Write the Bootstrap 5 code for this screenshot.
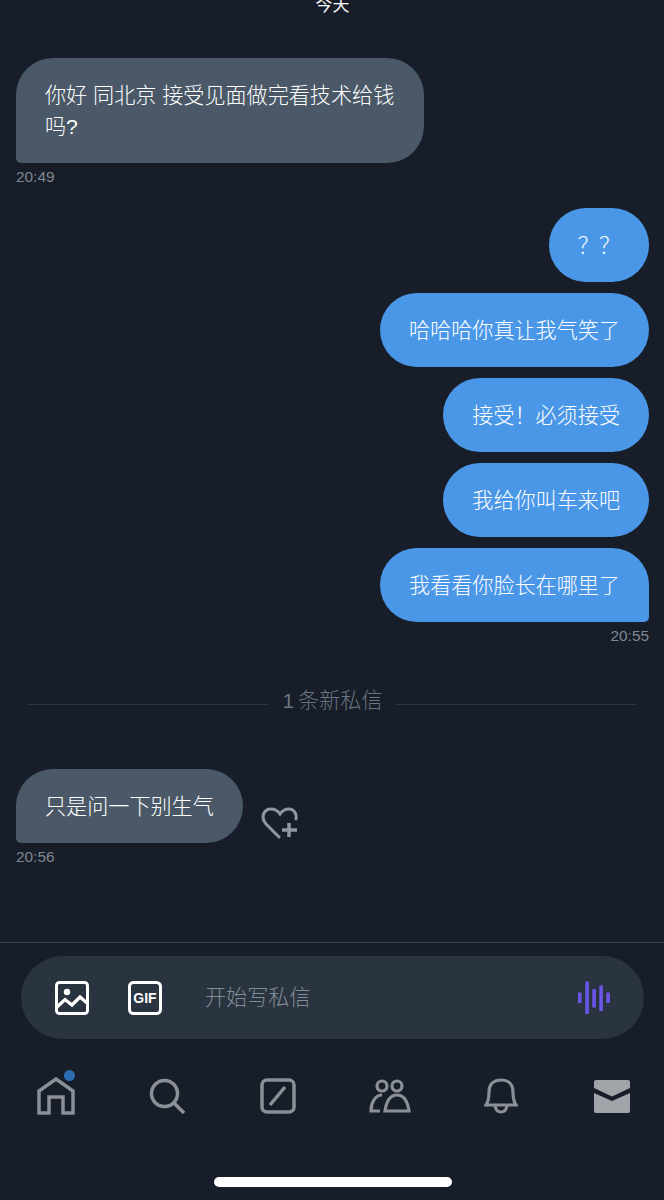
<!DOCTYPE html>
<html lang="zh-CN">
  <head>
    <meta charset="UTF-8" />
    <meta name="viewport" content="width=device-width, initial-scale=1.0" />
    <title>私信</title>
    <link
      rel="stylesheet"
      href="https://cdn.jsdelivr.net/npm/bootstrap@5.3.3/dist/css/bootstrap.min.css"
    />
    <style>
      html, body { background: #171e29; }
      body { font-family: "Liberation Sans", "Noto Sans CJK SC", sans-serif; }
      .screen { width: 664px; height: 1200px; overflow: hidden; background: #171e29; }
      .day-label { font-size: 17px; line-height: 24px; margin-top: -6px; color: #fff; }
      .thread { padding: 0 15px 0 16px; height: 942px; }
      .bubble { font-size: 21.1px; line-height: 31px; padding: 21.5px 29px; border-radius: 37px; color: #fff; max-width: 408px; font-weight: 300; }
      .bubble-in { background: #4a5867; border-bottom-left-radius: 5px; }
      .bubble-out { background: #4a97e8; }
      .bubble-tail { border-bottom-right-radius: 5px; }
      .stamp { font-size: 15.4px; line-height: 20px; color: #7f8790; margin-top: 4px; }
      .first-msg { margin-top: 40px; }
      .out-group { margin-top: 21px; gap: 11px; }
      .divider-row { margin: 33px 12px 0; gap: 14px; height: 44px; }
      .divider-line { height: 1px; background: #2b3541; margin-top: 6px; }
      .divider-text { font-size: 21.1px; color: #6a7581; font-weight: 300; word-spacing: -2px; }
      .last-msg { margin-top: 46px; }
      .react-icon { margin: 37px 0 0 18px; }
      .composer-wrap { border-top: 1px solid #3a4450; padding: 13px 20px 0 21px; }
      .composer { height: 83px; background: #2a3440; border-radius: 41.5px; padding: 0 33px 0 34px; }
      .placeholder-text { font-size: 21.1px; color: #838d97; margin-left: 43px; font-weight: 300; }
      .gif-icon { margin-left: 39px; }
      .tabbar { display: grid; grid-template-columns: repeat(6, 111.3px); justify-items: center; align-items: center; align-content: start; grid-auto-rows: 38px; padding-top: 38px; height: 138px; }
      .tab-dot { top: -7px; left: 27px; width: 11px; height: 11px; background: #2f6db3; }
      .home-pill { width: 238px; height: 10px; background: #fff; border-radius: 5px; margin-left: 214px; }
    </style>
  </head>
  <body>
    <div class="screen d-flex flex-column">
      <div class="thread">
        <div class="day-label text-center">今天</div>

        <div class="first-msg">
          <div class="bubble bubble-in">你好 同北京 接受见面做完看技术给钱吗?</div>
          <div class="stamp">20:49</div>
        </div>

        <div class="out-group d-flex flex-column align-items-end">
          <div class="bubble bubble-out">？？</div>
          <div class="bubble bubble-out">哈哈哈你真让我气笑了</div>
          <div class="bubble bubble-out">接受！必须接受</div>
          <div class="bubble bubble-out">我给你叫车来吧</div>
          <div class="bubble bubble-out bubble-tail">我看看你脸长在哪里了</div>
        </div>
        <div class="stamp text-end">20:55</div>

        <div class="divider-row d-flex align-items-center">
          <div class="divider-line flex-grow-1"></div>
          <div class="divider-text">1 条新私信</div>
          <div class="divider-line flex-grow-1"></div>
        </div>

        <div class="last-msg">
          <div class="d-flex align-items-start">
            <div class="bubble bubble-in">只是问一下别生气</div>
            <svg class="react-icon" width="38" height="34" viewBox="0 0 38 34" fill="none" stroke="#8f98a1" stroke-width="3" stroke-linecap="round">
              <path d="M18 31 L5 18 C-1 11 3 3 10 3 C14 3 17 5 19 8 C21 5 24 3 28 3 C33 3 36 8 35 13" />
              <path d="M28 17 V31 M21 24 H36" stroke-linecap="butt" stroke-width="3.5" />
            </svg>
          </div>
          <div class="stamp">20:56</div>
        </div>
      </div>

      <div class="composer-wrap">
        <div class="composer d-flex align-items-center">
          <svg width="34" height="34" viewBox="0 0 34 34" fill="none" stroke="#fff" stroke-width="3">
            <rect x="1.5" y="1.5" width="31" height="31" rx="3" />
            <circle cx="12" cy="11" r="3.2" fill="#fff" stroke="none" />
            <path d="M2 26 L10 18.5 L17 24 L25 16 L32 22" stroke-width="3.2" />
          </svg>
          <svg class="gif-icon" width="34" height="34" viewBox="0 0 34 34" fill="none" stroke="#fff" stroke-width="3">
            <rect x="1.5" y="1.5" width="31" height="31" rx="4" />
            <text x="17" y="22" text-anchor="middle" fill="#fff" stroke="none" font-family="Liberation Sans, sans-serif" font-weight="700" font-size="14">GIF</text>
          </svg>
          <div class="placeholder-text flex-grow-1">开始写私信</div>
          <svg width="33" height="34" viewBox="0 0 33 34" fill="#6a55e6">
            <rect x="0" y="11.5" width="3.6" height="10.5" />
            <rect x="7.3" y="0.5" width="3.6" height="32.5" />
            <rect x="14.3" y="8" width="3.6" height="18.5" />
            <rect x="21.3" y="4.5" width="3.6" height="25.5" />
            <rect x="28.3" y="11.5" width="3.6" height="10.5" />
          </svg>
        </div>
      </div>

      <div class="tabbar">
        <div class="position-relative d-flex">
          <svg width="38" height="38" viewBox="0 0 38 38" fill="none" stroke="#8b9096" stroke-width="3.5">
            <path d="M2 36 V14 L19 2 L36 14 V36 H26 V20 H12 V36 Z" />
          </svg>
          <span class="position-absolute rounded-circle tab-dot"></span>
        </div>
        <svg width="36" height="36" viewBox="0 0 36 36" fill="none" stroke="#8b9096" stroke-width="3.5">
          <circle cx="15.5" cy="15.5" r="13" />
          <path d="M25 25 L35 35" />
        </svg>
        <svg width="36" height="36" viewBox="0 0 36 36" fill="none" stroke="#8b9096" stroke-width="3.5">
          <rect x="2" y="2" width="32" height="32" rx="5" />
          <path d="M10 27 L25 9" />
        </svg>
        <svg width="42" height="34" viewBox="0 0 42 34" fill="none" stroke="#8b9096" stroke-width="3.2">
          <circle cx="13" cy="7" r="5" />
          <circle cx="28" cy="7" r="5" />
          <path d="M13 16 C6 16 2 24 2 32 H11" />
          <path d="M28 16 C20 16 17 25 16 32 H40 C39 25 36 16 28 16 Z" />
        </svg>
        <svg width="34" height="36" viewBox="0 0 34 36" fill="none" stroke="#8b9096" stroke-width="3.2">
          <path d="M2 27 C4 24 5 21 5 14 C5 6 10 2 17 2 C24 2 29 6 29 14 C29 21 30 24 32 27 Z" />
          <path d="M11 28 C12 33 14 34 17 34 C20 34 22 33 23 28" />
        </svg>
        <svg width="36" height="33" viewBox="0 0 36 33">
          <path fill="#a0a4a9" d="M2 0 H34 A2 2 0 0 1 36 2 V8 L18 16.5 L0 8 V2 A2 2 0 0 1 2 0 Z M0 13 L18 21 L36 13 V31 A2 2 0 0 1 34 33 H2 A2 2 0 0 1 0 31 Z" />
        </svg>
      </div>

      <div class="home-pill"></div>
    </div>

    <script src="https://cdn.jsdelivr.net/npm/bootstrap@5.3.3/dist/js/bootstrap.bundle.min.js"></script>
  </body>
</html>
